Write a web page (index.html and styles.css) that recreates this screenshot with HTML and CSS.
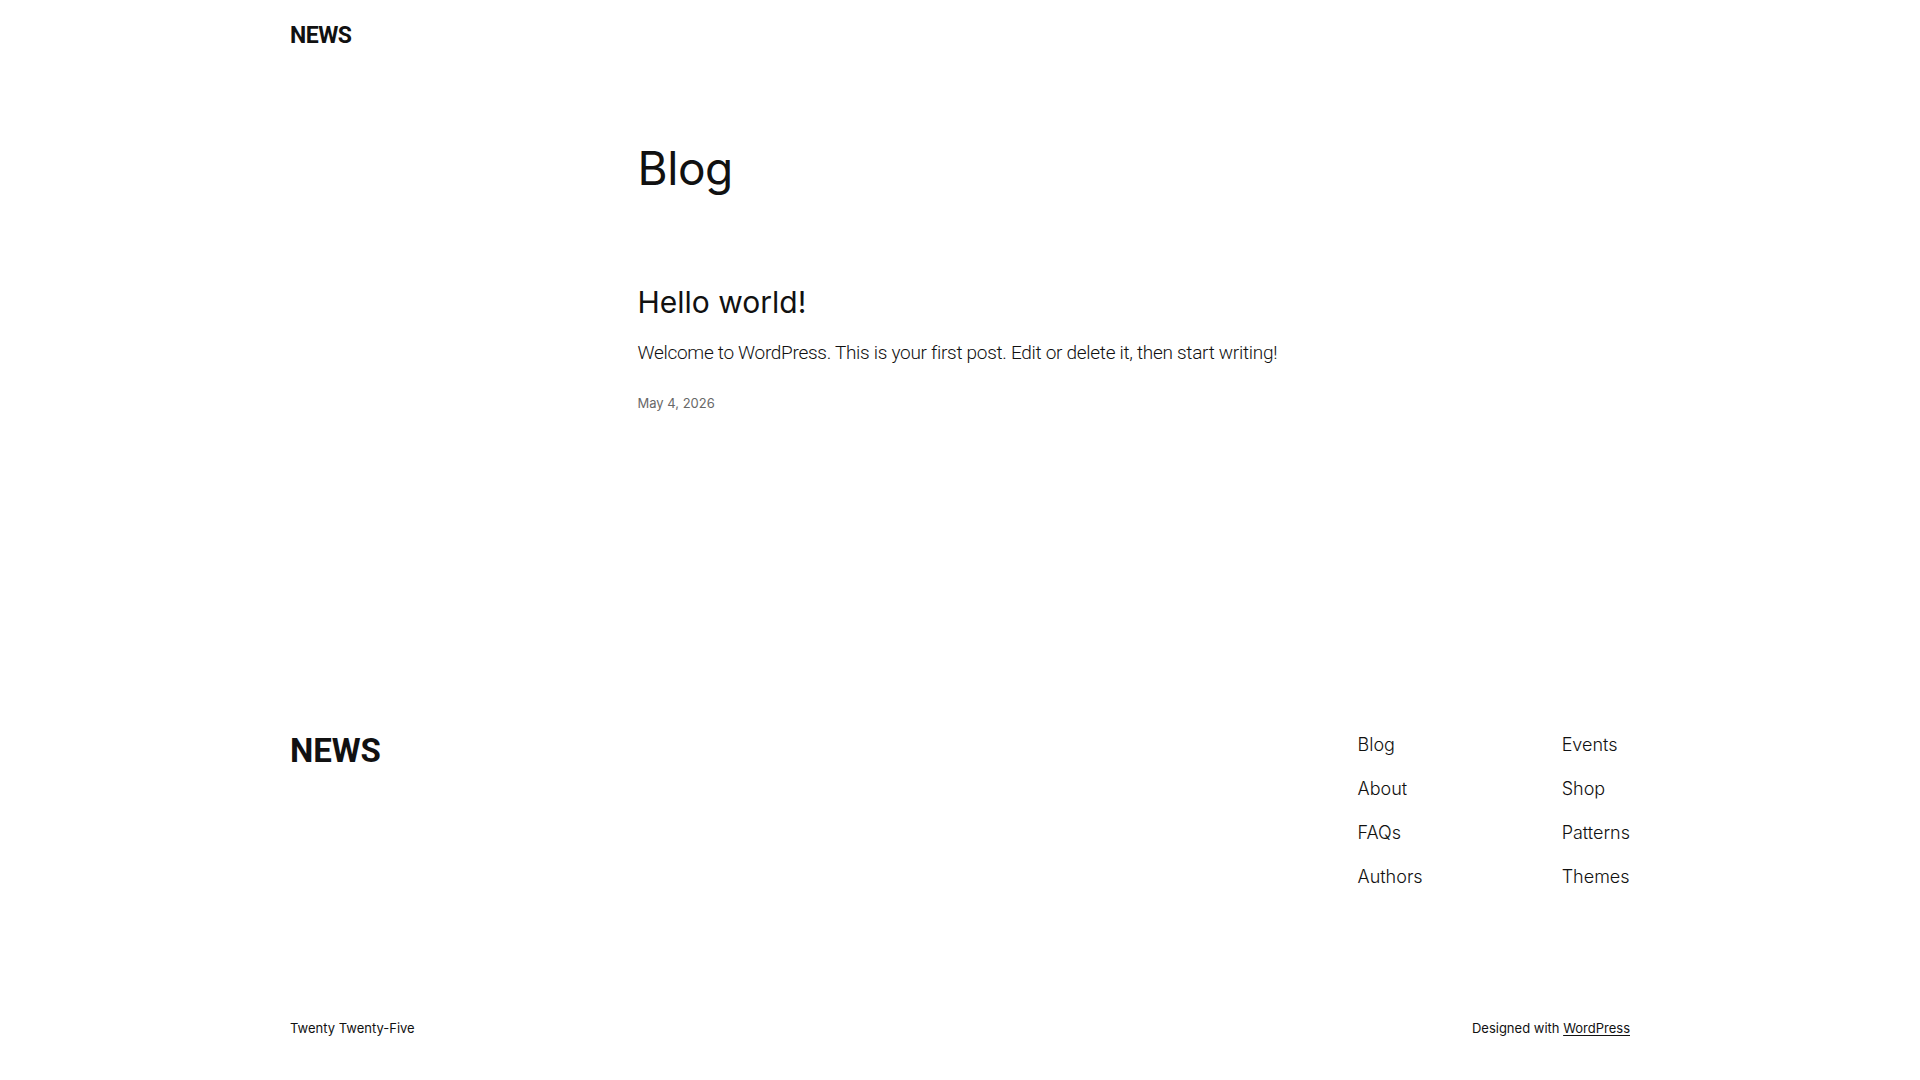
FILE: index.html
```html
<!DOCTYPE html>
<html lang="en">
<head>
<meta charset="utf-8">
<title>Blog – NEWS</title>
<link rel="stylesheet" href="styles.css">
</head>
<body>
<header class="site-header">
  <div class="wide">
    <a class="site-title" href="#">NEWS</a>
  </div>
</header>
<main class="site-main">
  <div class="content">
    <h1 class="page-title">Blog</h1>
    <article class="post">
      <h2 class="post-title"><a href="#">Hello world!</a></h2>
      <p class="excerpt">Welcome to WordPress. This is your first post. Edit or delete it, then start writing!</p>
      <div class="post-date">May 4, 2026</div>
    </article>
  </div>
</main>
<footer class="site-footer">
  <div class="wide footer-top">
    <a class="footer-title" href="#">NEWS</a>
    <nav class="footer-nav">
      <ul class="nav-col">
        <li><a href="#">Blog</a></li>
        <li><a href="#">About</a></li>
        <li><a href="#">FAQs</a></li>
        <li><a href="#">Authors</a></li>
      </ul>
      <ul class="nav-col">
        <li><a href="#">Events</a></li>
        <li><a href="#">Shop</a></li>
        <li><a href="#">Patterns</a></li>
        <li><a href="#">Themes</a></li>
      </ul>
    </nav>
  </div>
  <div class="wide footer-bottom">
    <p class="credit">Twenty Twenty-Five</p>
    <p class="credit">Designed with <a href="#">WordPress</a></p>
  </div>
</footer>
</body>
</html>
```

FILE: styles.css
```css
* { box-sizing: border-box; }

html, body {
  margin: 0;
  padding: 0;
  background: #ffffff;
  color: #111111;
  font-family: Inter, "Noto Sans", sans-serif;
}

a { color: inherit; text-decoration: none; }

.wide {
  width: 1340px;
  margin: 0 auto;
}

.content {
  width: 645px;
  margin: 0 auto;
}

/* header */
.site-header {
  padding: 22px 0 20px;
}

.site-title {
  display: inline-block;
  font-family: Roboto, "Liberation Sans", sans-serif;
  font-weight: 700;
  font-size: 23px;
  line-height: 1.2;
  letter-spacing: -0.5px;
}

/* main */
.site-main {
  padding-top: 71px;
  padding-bottom: 318px;
}

.page-title {
  margin: 0;
  font-family: Inter, sans-serif;
  font-weight: 400;
  font-size: 46px;
  line-height: 1.2;
  letter-spacing: -0.4px;
}

.post {
  margin-top: 88px;
}

.post-title {
  margin: 0;
  font-family: Inter, sans-serif;
  font-weight: 400;
  font-size: 30px;
  line-height: 1.2;
  letter-spacing: 0;
}

.excerpt {
  margin: 20px 0 0;
  font-family: Roboto, "Liberation Sans", sans-serif;
  font-weight: 300;
  font-size: 19px;
  line-height: 1.4;
  letter-spacing: -0.29px;
  white-space: nowrap;
}

.post-date {
  margin-top: 28px;
  font-family: Inter, sans-serif;
  font-weight: 400;
  font-size: 13px;
  line-height: 1.4;
  color: #686868;
}

/* footer */
.footer-top {
  display: flex;
  justify-content: space-between;
  align-items: flex-start;
}

.footer-title {
  font-family: Roboto, "Liberation Sans", sans-serif;
  font-weight: 700;
  font-size: 33px;
  line-height: 1.2;
  letter-spacing: -0.1px;
}

.footer-nav {
  display: flex;
  gap: 139px;
}

.nav-col {
  list-style: none;
  margin: 0;
  padding: 0;
  display: flex;
  flex-direction: column;
  gap: 17px;
}

.nav-col a {
  font-family: Inter, sans-serif;
  font-weight: 300;
  font-size: 18px;
  line-height: 1.5;
  display: block;
}

.footer-bottom {
  display: flex;
  justify-content: space-between;
  align-items: baseline;
  margin-top: 129px;
  padding-bottom: 40px;
}

.credit {
  margin: 0;
  font-family: Inter, sans-serif;
  font-weight: 400;
  font-size: 13px;
  line-height: 1.4;
  color: #111111;
}

.credit a {
  text-decoration: underline;
  text-underline-offset: 2px;
  text-decoration-thickness: 1px;
}
```
